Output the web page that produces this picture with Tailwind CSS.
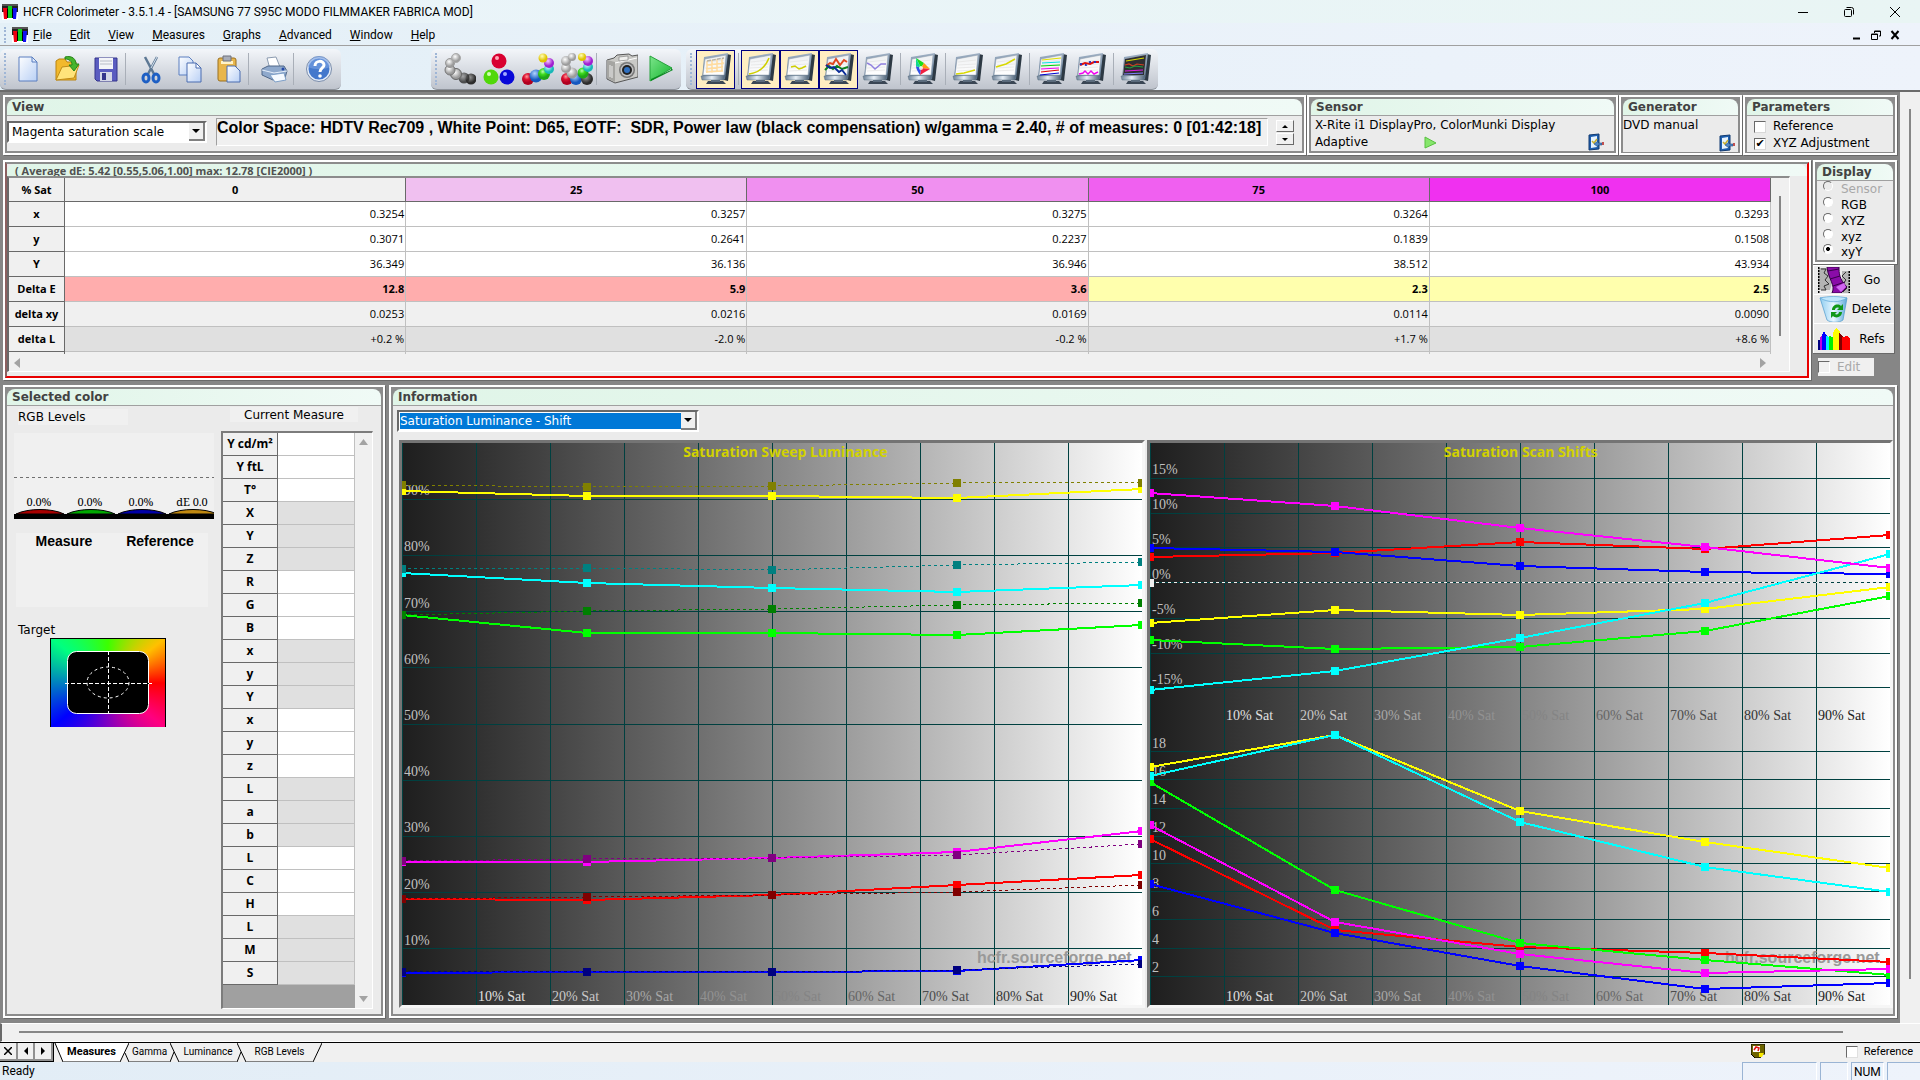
<!DOCTYPE html>
<html lang="en">
  <head>
    <meta charset="UTF-8" />
    <meta name="viewport" content="width=device-width, initial-scale=1.0" />
    <script src="https://cdn.jsdelivr.net/npm/@tailwindcss/browser@4"></script>
    <title>HCFR Colorimeter</title>
  </head>
  <body class="bg-[#808080] text-black font-['DejaVu_Sans',sans-serif] text-[12px] leading-4">
    <!-- shared gradients and symbols -->
    <svg class="absolute w-0 h-0" aria-hidden="true">
      <defs>
        <linearGradient id="gFrame" x1="0" y1="0" x2="0" y2="1"><stop offset="0" stop-color="#9fb0c4" /><stop offset="1" stop-color="#5d7894" /></linearGradient>
        <linearGradient id="gChin" x1="0" y1="0" x2="1" y2="0"><stop offset="0" stop-color="#6d8298" /><stop offset=".45" stop-color="#e6eef6" /><stop offset="1" stop-color="#4c6176" /></linearGradient>
        <linearGradient id="gScreen" x1="0" y1="0" x2="0" y2="1"><stop offset="0" stop-color="#eef0f2" /><stop offset="1" stop-color="#ffffff" /></linearGradient>
        <linearGradient id="gPage" x1="0" y1="0" x2="1" y2="1"><stop offset="0" stop-color="#fdfeff" /><stop offset="1" stop-color="#b9d0f5" /></linearGradient>
        <linearGradient id="gBin" x1="0" y1="0" x2="1" y2="0"><stop offset="0" stop-color="#8fcdf0" /><stop offset=".5" stop-color="#e8f7ff" /><stop offset="1" stop-color="#5fa9d8" /></linearGradient>
        <linearGradient id="gPlay" x1="0" y1="0" x2="1" y2="1"><stop offset="0" stop-color="#7de58c" /><stop offset="1" stop-color="#12b52c" /></linearGradient>
        <radialGradient id="sGray" cx=".4" cy=".35"><stop offset="0" stop-color="#fff" /><stop offset="1" stop-color="#9c9c9c" /></radialGradient>
        <radialGradient id="sDark" cx=".4" cy=".35"><stop offset="0" stop-color="#999" /><stop offset="1" stop-color="#2c2c2c" /></radialGradient>
        <radialGradient id="sRed" cx=".4" cy=".3"><stop offset="0" stop-color="#ff9a9a" /><stop offset=".5" stop-color="#dd1030" /><stop offset="1" stop-color="#b00020" /></radialGradient>
        <radialGradient id="sGreen" cx=".4" cy=".3"><stop offset="0" stop-color="#b8ffb0" /><stop offset=".5" stop-color="#3edc1e" /><stop offset="1" stop-color="#20a818" /></radialGradient>
        <radialGradient id="sSky" cx=".4" cy=".3"><stop offset="0" stop-color="#b0d4ff" /><stop offset="1" stop-color="#1458c0" /></radialGradient>
        <radialGradient id="sCyan" cx=".4" cy=".3"><stop offset="0" stop-color="#d8ffff" /><stop offset="1" stop-color="#18b8b8" /></radialGradient>
        <radialGradient id="sViolet" cx=".4" cy=".3"><stop offset="0" stop-color="#f8ccff" /><stop offset="1" stop-color="#a020d0" /></radialGradient>
        <radialGradient id="sYellow" cx=".4" cy=".3"><stop offset="0" stop-color="#ffffb8" /><stop offset="1" stop-color="#e0c400" /></radialGradient>
        <symbol id="logo" viewBox="0 0 16 16">
          <path d="M0 0h16v8H0z" fill="#222" /><path d="M0 8h16v8H0z" fill="#fff" /><path d="M0 0h16v2H0z" fill="#555" />
          <path d="M1 4h4v11H2z" fill="#f00010" /><path d="M6 2h4v12H6z" fill="#10d020" /><path d="M11 4h4l-1 11h-3z" fill="#1010f0" />
          <path d="M5 5h1v9H5zM10 5h1v9h-1z" fill="#000" />
        </symbol>
        <symbol id="monitor" viewBox="0 0 34 34">
          <path d="M9 29h15l3 3H7z" fill="#3a4654" /><path d="M12 27h9v3h-9z" fill="#5b6b7c" />
          <path d="M28 2l4 1-3 26-4-1z" fill="#2d3944" />
          <path d="M5 5L29 1l-3 26H3z" fill="url(#gFrame)" />
          <path d="M2 24l24-1-1 5H3z" fill="url(#gChin)" stroke="#5f7080" stroke-width=".5" />
          <path d="M6 7l21-4-2 20H4z" fill="url(#gScreen)" stroke="#8a99a8" stroke-width=".5" />
          <path d="M7 10l18-2M7 13l18-1M6 16l18-1M6 19l18-1" stroke="#e3e3e3" stroke-width=".7" />
        </symbol>
        <symbol id="wizard" viewBox="0 0 18 18">
          <path d="M2 2l10-1v15l-10 1z" fill="#1d5fb0" stroke="#123a70" /><path d="M4 4l6-1v11l-6 1z" fill="#e6f3ff" />
          <path d="M5 8l2 2 3-4" fill="none" stroke="#c8b030" stroke-width="1.5" /><path d="M7 11l4-3v2h4v2h-4v2z" fill="#4d86c8" stroke="#27507f" stroke-width=".6" /><path d="M15 9h2v3h-2z" fill="#c05050" />
        </symbol>
      </defs>
    </svg>

    <div class="flex flex-col h-screen min-h-[900px]">
      <!-- title bar -->
      <header class="flex items-center h-[23px] pl-[2px] bg-gradient-to-r from-[#eaf4fa] to-[#e9f5f4] font-[Roboto,sans-serif]">
        <svg class="w-4 h-4"><use href="#logo" /></svg>
        <h1 class="pl-[5px]">HCFR Colorimeter - 3.5.1.4 - [SAMSUNG 77 S95C MODO FILMMAKER FABRICA MOD]</h1>
        <div class="flex items-center ml-auto pr-[2px]">
          <button aria-label="Minimize" class="w-[46px] flex justify-center"><svg class="w-3 h-3" viewBox="0 0 12 12"><path d="M1 6.500h10" stroke="#000" /></svg></button>
          <button aria-label="Restore" class="w-[46px] flex justify-center"><svg class="w-3 h-3" viewBox="0 0 12 12" fill="none" stroke="#000"><rect x="1.500" y="3.500" width="7" height="7" rx="1" /><path d="M3.500 1.500h5a2 2 0 0 1 2 2v5" /></svg></button>
          <button aria-label="Close" class="w-[46px] flex justify-center"><svg class="w-3 h-3" viewBox="0 0 12 12"><path d="M1 1l10 10M11 1L1 11" stroke="#000" /></svg></button>
        </div>
      </header>

      <!-- menu bar -->
      <nav class="flex items-center h-[23px] pl-1 pt-px bg-gradient-to-r from-[#e4f0f7] to-[#eef3fb] border-b border-[#a0a0a0] font-[Roboto,sans-serif]">
        <span class="h-4 border-l-2 border-dotted border-[#9fb6d6]"></span>
        <svg class="w-4 h-4 ml-[6px] mr-1"><use href="#logo" /></svg>
        <a href="#" class="pl-px pr-[18px]"><u>F</u>ile</a>
        <a href="#" class="pr-[18px]"><u>E</u>dit</a>
        <a href="#" class="pr-[18px]"><u>V</u>iew</a>
        <a href="#" class="pr-[18px]"><u>M</u>easures</a>
        <a href="#" class="pr-[18px]"><u>G</u>raphs</a>
        <a href="#" class="pr-[18px]"><u>A</u>dvanced</a>
        <a href="#" class="pr-[18px]"><u>W</u>indow</a>
        <a href="#"><u>H</u>elp</a>
        <div class="flex ml-auto pr-5 gap-[9px]">
          <button aria-label="Minimize document"><svg class="w-[10px] h-[10px]" viewBox="0 0 10 10"><path d="M1 8.500h7" stroke="#000" stroke-width="2" /></svg></button>
          <button aria-label="Restore document"><svg class="w-[10px] h-[10px]" viewBox="0 0 10 10" fill="none" stroke="#000"><path d="M3.500 3V1h6v5H8M3 1.500h7" /><path d="M.5 4h6v5.500h-6zM0 4.500h7" /></svg></button>
          <button aria-label="Close document"><svg class="w-[10px] h-[10px]" viewBox="0 0 10 10"><path d="M1.500 1l7 8M8.500 1l-7 8" stroke="#000" stroke-width="2" /></svg></button>
        </div>
      </nav>

      <!-- toolbars -->
      <div class="flex items-end h-11 bg-gradient-to-r from-[#e2eff7] to-[#eef3fb]">
        <div class="flex items-center h-[41px] w-[341px] rounded-md bg-gradient-to-b from-[#f3f6fa] to-[#bfc4cd] border-b border-[#8d929a]">
          <span class="h-8 ml-1 mr-[2px] border-l-2 border-dotted border-[#9fb6d6]"></span>
          <button aria-label="New" class="w-[39px] flex justify-center"><svg class="w-8 h-8" viewBox="0 0 32 32"><path d="M7 4h13l5 5v19H7z" fill="url(#gPage)" stroke="#5b7fc0" /><path d="M20 4v5h5z" fill="#dfeafc" stroke="#5b7fc0" /></svg></button>
          <button aria-label="Open" class="w-[39px] flex justify-center"><svg class="w-8 h-8" viewBox="0 0 32 32"><path d="M5 27V8l3-2h6l2 3h9v18z" fill="#f2b92c" stroke="#b98310" /><path d="M5 27l6-13 17-2-5 13z" fill="#ffe47a" stroke="#c08c18" /><path d="M14 4c8-2 11 3 11 7h3l-5 7-5-6h3c0-4-3-6-7-6z" fill="#46b52c" stroke="#25831a" /></svg></button>
          <button aria-label="Save" class="w-[39px] flex justify-center"><svg class="w-8 h-8" viewBox="0 0 32 32"><path d="M5 5h22v23H7l-2-2z" fill="#5a5cc0" stroke="#34358c" /><path d="M9 5h14v11H9z" fill="#f3f4f8" /><path d="M10 8h12M10 11h12" stroke="#b8bcc8" /><path d="M10 19h12v9H10z" fill="#d4d7e6" /><path d="M12 20h4v7h-4z" fill="#34358c" /></svg></button>
          <span class="w-[6px] h-8 border-l border-[#a9afb8]"></span>
          <button aria-label="Cut" class="w-[39px] flex justify-center"><svg class="w-8 h-8" viewBox="0 0 32 32" fill="none"><path d="M10 4l9 17M22 4l-9 17" stroke="#5d7894" stroke-width="2.500" /><path d="M22 4l-6 11" stroke="#d6e2ee" stroke-width="1" /><ellipse cx="11" cy="25" rx="3" ry="4" stroke="#1d5fc4" stroke-width="3" /><ellipse cx="21" cy="25" rx="3" ry="4" stroke="#1d5fc4" stroke-width="3" /></svg></button>
          <button aria-label="Copy" class="w-[39px] flex justify-center"><svg class="w-8 h-8" viewBox="0 0 32 32"><path d="M5 4h10l4 4v14H5z" fill="url(#gPage)" stroke="#5b7fc0" /><path d="M13 10h9l5 5v14H13z" fill="url(#gPage)" stroke="#4a6cb0" /><path d="M22 10v5h5z" fill="#fff" stroke="#4a6cb0" /></svg></button>
          <button aria-label="Paste" class="w-[39px] flex justify-center"><svg class="w-8 h-8" viewBox="0 0 32 32"><rect x="5" y="5" width="18" height="23" rx="2" fill="#e8b64c" stroke="#9a7020" /><path d="M8 8h12v3H8z" fill="#fff3c8" /><path d="M10 3h8v5h-8z" fill="#a8adb8" stroke="#6c717c" /><path d="M14 13h8l5 5v11H14z" fill="url(#gPage)" stroke="#4a6cb0" /></svg></button>
          <span class="w-[6px] h-8 border-l border-[#a9afb8]"></span>
          <button aria-label="Print" class="w-[39px] flex justify-center"><svg class="w-8 h-8" viewBox="0 0 32 32"><path d="M9 5l9-1 4 10-10 2z" fill="#fff" stroke="#8b9bb0" /><path d="M4 16l6-3 16 0 3 5-2 7-12 2L4 22z" fill="#8fa9cc" stroke="#4f6788" /><path d="M4 17l12 3 13-2" stroke="#e5eefa" fill="none" /><path d="M12 22l14-2 2 7-11 2z" fill="#f5faff" stroke="#7fa0c8" /><circle cx="25" cy="16" r="1.500" fill="#2448a8" /></svg></button>
          <span class="w-[6px] h-8 border-l border-[#a9afb8]"></span>
          <button aria-label="Help" class="w-[39px] flex justify-center"><svg class="w-8 h-8" viewBox="0 0 32 32"><circle cx="16" cy="16" r="11.500" fill="#4478cc" stroke="#e4ecf8" stroke-width="2" /><circle cx="16" cy="16" r="12.500" fill="none" stroke="#7a8caa" /><path d="M5 14a11 11 0 0 1 22 0c-7 3-15 3-22 0z" fill="#7aa2e2" opacity=".6" /><path d="M12 13c0-6 9-6 9-1 0 3-4 3-4 7" fill="none" stroke="#fff" stroke-width="3" /><circle cx="17" cy="23" r="1.800" fill="#fff" /></svg></button>
        </div>

        <div class="flex items-center h-[41px] w-[250px] ml-[90px] rounded-md bg-gradient-to-b from-[#f3f6fa] to-[#bfc4cd] border-b border-[#8d929a]">
          <span class="h-8 ml-1 mr-[3px] border-l-2 border-dotted border-[#9fb6d6]"></span>
          <button aria-label="Measure grays" class="w-[39px] flex justify-center"><svg class="w-8 h-8" viewBox="0 0 32 32"><circle cx="27" cy="26" r="5.500" fill="url(#sDark)" /><circle cx="20" cy="25" r="5.500" fill="url(#sDark)" opacity=".8" /><circle cx="12" cy="21" r="5.500" fill="url(#sGray)" stroke="#666" /><circle cx="6" cy="17" r="5" fill="url(#sGray)" stroke="#777" /><circle cx="6" cy="10" r="4.500" fill="url(#sGray)" stroke="#999" /><circle cx="12" cy="5" r="4.500" fill="url(#sGray)" stroke="#aaa" /></svg></button>
          <button aria-label="Measure primaries" class="w-[39px] flex justify-center"><svg class="w-8 h-8" viewBox="0 0 32 32"><circle cx="16" cy="8" r="7.500" fill="#d80030" /><circle cx="8" cy="24" r="7.500" fill="#50d808" /><circle cx="24" cy="24" r="7.500" fill="#0808d8" /><circle cx="14" cy="5" r="2" fill="#ffa8b8" /><circle cx="6" cy="21" r="2" fill="#d0ffb0" /><circle cx="22" cy="21" r="2" fill="#a0a8ff" /></svg></button>
          <button aria-label="Measure saturations" class="w-[39px] flex justify-center"><svg class="w-8 h-8" viewBox="0 0 32 32"><circle cx="6" cy="26" r="6" fill="url(#sRed)" /><circle cx="14" cy="23" r="6.500" fill="url(#sSky)" /><circle cx="22" cy="21" r="6" fill="url(#sGreen)" /><circle cx="27" cy="16" r="5" fill="url(#sCyan)" /><circle cx="27" cy="10" r="5" fill="url(#sViolet)" /><circle cx="21" cy="5" r="4.500" fill="url(#sYellow)" /></svg></button>
          <button aria-label="Measure all colors" class="w-[39px] flex justify-center"><svg class="w-8 h-8" viewBox="0 0 32 32"><circle cx="6" cy="26" r="6" fill="url(#sRed)" /><circle cx="15" cy="26" r="6" fill="url(#sSky)" /><circle cx="26" cy="26" r="6" fill="url(#sDark)" /><circle cx="22" cy="20" r="5.500" fill="url(#sGreen)" /><circle cx="11" cy="20" r="5.500" fill="url(#sGray)" /><circle cx="27" cy="14" r="5" fill="url(#sCyan)" /><circle cx="5" cy="15" r="5" fill="url(#sGray)" /><circle cx="27" cy="8" r="5" fill="url(#sViolet)" /><circle cx="5" cy="8" r="5" fill="url(#sGray)" /><circle cx="21" cy="4" r="4" fill="url(#sYellow)" /><circle cx="11" cy="4" r="4" fill="url(#sGray)" /></svg></button>
          <span class="w-[6px] h-8 border-l border-[#a9afb8]"></span>
          <button aria-label="Snapshot" class="w-[39px] flex justify-center"><svg class="w-8 h-8" viewBox="0 0 32 32"><path d="M1 7l7-2 3-3 12-1 3 2 6-1v22L9 30l-8-4z" fill="#c9c9c6" stroke="#565656" /><path d="M1 7l8 2v20l-8-4z" fill="#a5a5a2" /><path d="M9 10l22-5" stroke="#fff" /><path d="M4 12v12M6 13v12" stroke="#eee" /><path d="M13 4l9-1v4l-9 1z" fill="#f0f0ee" stroke="#777" stroke-width=".6" /><circle cx="21" cy="17" r="8" fill="#777" /><circle cx="21" cy="17" r="6.500" fill="#c0c0c0" /><circle cx="21" cy="17" r="5" fill="#222" /><circle cx="21" cy="17" r="3" fill="#2f6fc0" /></svg></button>
          <button aria-label="Start" class="w-[39px] flex justify-center"><svg class="w-8 h-8" viewBox="0 0 32 32"><path d="M5 3l22 12L5 28z" fill="url(#gPlay)" stroke="#25a33a" /><path d="M6 26l20-9v-2l2 2-22 11z" fill="#0a8a20" /></svg></button>
        </div>

        <div class="flex items-center h-[41px] w-[472px] ml-[5px] rounded-md bg-gradient-to-b from-[#f3f6fa] to-[#bfc4cd] border-b border-[#8d929a]">
          <span class="h-8 ml-1 mr-[4px] border-l-2 border-dotted border-[#9fb6d6]"></span>
          <button aria-label="Measures view" class="w-[39px] h-[39px] flex justify-center items-center bg-[#ffeec2] border border-[#000080]"><svg class="w-[34px] h-[34px]" viewBox="0 0 34 34"><use href="#monitor" /><path d="M8 13l17-2M7 17l17-2M7 20l17-1M8 9v12M13 8v13M18 7v13M23 7v13" stroke="#ffdca0" stroke-width="1.500" fill="none" /><path d="M8 9l17-3" stroke="#b8b0a0" stroke-width="1.500" stroke-dasharray="4 1" /></svg></button>
          <span class="w-[6px] h-8 flex justify-center"><i class="border-l border-[#a9afb8]"></i></span>
          <button aria-label="Luminance graph" class="w-[39px] h-[39px] flex justify-center items-center bg-[#ffeec2] border border-[#000080]"><svg class="w-[34px] h-[34px]" viewBox="0 0 34 34"><use href="#monitor" /><path d="M5 22c9-1 16-6 20-16" stroke="#cfcf00" stroke-width="1.500" fill="none" /></svg></button>
          <button aria-label="Gamma graph" class="w-[39px] h-[39px] flex justify-center items-center bg-[#ffeec2] border border-[#000080]"><svg class="w-[34px] h-[34px]" viewBox="0 0 34 34"><use href="#monitor" /><path d="M8 15l4-1 4 3 3-1 4-2" stroke="#cfcf00" stroke-width="1.500" fill="none" /></svg></button>
          <button aria-label="RGB levels graph" class="w-[39px] h-[39px] flex justify-center items-center bg-[#ffeec2] border border-[#000080]"><svg class="w-[34px] h-[34px]" viewBox="0 0 34 34" fill="none" stroke-width="2"><use href="#monitor" /><path d="M4 14l4-3 3 1 3-5 4 6 4-5 3 2" stroke="#e04820" /><path d="M3 18l4-4 4 3 4-3 5 3 6-2" stroke="#108020" /><path d="M4 13l4 3 4-1 5 5 3-2 4 5" stroke="#0a2c98" /></svg></button>
          <button aria-label="Color temperature graph" class="w-[39px] h-[39px] flex justify-center items-center"><svg class="w-[34px] h-[34px]" viewBox="0 0 34 34"><use href="#monitor" /><path d="M6 11l4 2 4 4 6-5h5" stroke="#9080e0" stroke-width="1.500" fill="none" /></svg></button>
          <span class="w-[6px] h-8 flex justify-center"><i class="border-l border-[#a9afb8]"></i></span>
          <button aria-label="CIE chart" class="w-[39px] h-[39px] flex justify-center items-center"><svg class="w-[34px] h-[34px]" viewBox="0 0 34 34"><use href="#monitor" /><path d="M10 6l8 5-3 5z" fill="#18e018" /><path d="M18 11l6 6-9-1z" fill="#ff9a10" /><path d="M24 17l-10 6 1-7z" fill="#f02040" /><path d="M14 23c-2-3-4-6-4-9l5 2z" fill="#3050e8" /><path d="M10 14V6l5 10z" fill="#10d890" /><circle cx="15" cy="16" r="2" fill="#fff" opacity=".8" /></svg></button>
          <span class="w-[6px] h-8 flex justify-center"><i class="border-l border-[#a9afb8]"></i></span>
          <button aria-label="Near black graph" class="w-[39px] h-[39px] flex justify-center items-center"><svg class="w-[34px] h-[34px]" viewBox="0 0 34 34"><use href="#monitor" /><path d="M5 22l8-1 11-3" stroke="#d8d800" stroke-width="1.500" fill="none" /></svg></button>
          <button aria-label="Near white graph" class="w-[39px] h-[39px] flex justify-center items-center"><svg class="w-[34px] h-[34px]" viewBox="0 0 34 34"><use href="#monitor" /><path d="M6 15l10-3 9-5" stroke="#d8d800" stroke-width="1.500" fill="none" /></svg></button>
          <span class="w-[6px] h-8 flex justify-center"><i class="border-l border-[#a9afb8]"></i></span>
          <button aria-label="Saturation luminance graph" class="w-[39px] h-[39px] flex justify-center items-center"><svg class="w-[34px] h-[34px]" viewBox="0 0 34 34" stroke-width="1.200"><use href="#monitor" /><path d="M7 8l19-2" stroke="#e0e000" /><path d="M7 11l18-1" stroke="#00e0e0" /><path d="M6 14l19-1" stroke="#00d000" /><path d="M6 17l18-1" stroke="#f000f0" /><path d="M6 20l18-2" stroke="#e00000" /><path d="M5 23l19-2" stroke="#0000d0" /></svg></button>
          <button aria-label="Saturation shift graph" class="w-[39px] h-[39px] flex justify-center items-center"><svg class="w-[34px] h-[34px]" viewBox="0 0 34 34" stroke-width="2" fill="none"><use href="#monitor" /><path d="M6 13l5-2 5 1 4-2h5" stroke="#e01010" /><path d="M6 12l6 1 4-3h9" stroke="#2030c0" stroke-dasharray="2 3" /><path d="M5 22l4-1 2-2 3 3 3-3 3 3 4-2" stroke="#f000f0" stroke-width="1.500" /></svg></button>
          <span class="w-[6px] h-8 flex justify-center"><i class="border-l border-[#a9afb8]"></i></span>
          <button aria-label="Full graph" class="w-[39px] h-[39px] flex justify-center items-center"><svg class="w-[34px] h-[34px]" viewBox="0 0 34 34" fill="none" stroke-width="1.200"><use href="#monitor" /><path d="M6 7l21-4-2 20H4z" fill="#2e2e32" /><path d="M7 9l18-3" stroke="#d8d800" /><path d="M6 13l4-1 4 2 4-2 7 1" stroke="#d04020" /><path d="M6 15l5 1 5-2 8 1" stroke="#20a040" /><path d="M6 19l18-1" stroke="#e020e0" /><path d="M5 22l19-1" stroke="#8080ff" /></svg></button>
        </div>
      </div>

      <!-- document area -->
      <main class="flex flex-1 min-h-0 border-t-2 border-[#6b6b6b] bg-[#f0f0f0]">
        <div class="flex flex-col flex-1 min-w-0 gap-[5px] pt-[3px] pb-[5px] pl-[3px] pr-[3px] bg-[#868686]">
          <!-- view row -->
          <div class="flex gap-px h-[60px] shrink-0">
            <section class="flex flex-1 border-2 border-white shadow-[1px_1px_0_#696969]">
              <div class="flex flex-col flex-1 border-2 border-[#8c8c8c] bg-[#8c8c8c]">
                <h2 class="h-[17px] shrink-0 pl-[5px] rounded-t-lg bg-gradient-to-r from-[#e0f5e8] to-[#f0faf6] border-b border-[#a0a0a0] font-bold text-[#424242]">View</h2>
                <div class="flex flex-1 items-start bg-[#ebebeb]">
                  <div class="relative w-[200px] mt-[5px]">
                    <select aria-label="View" class="w-full h-[22px] pl-[3px] appearance-none bg-white border-2 border-t-[#696969] border-l-[#696969] border-b-white border-r-white">
                      <option>Magenta saturation scale</option>
                    </select>
                    <span class="absolute right-[2px] top-[2px] w-4 h-[18px] flex items-center justify-center pointer-events-none bg-[#f0f0f0] border-b-2 border-r-2 border-[#808080]"><svg class="w-2 h-2" viewBox="0 0 8 8"><path d="M0 2h8L4 6z" /></svg></span>
                  </div>
                  <p class="flex-1 ml-[9px] mt-[2px] h-7 whitespace-pre overflow-hidden bg-[#f0f0f0] border border-t-[#a0a0a0] border-l-[#a0a0a0] border-b-white border-r-white font-['Liberation_Sans',sans-serif] font-bold text-[16px] leading-[18px]">Color Space: HDTV Rec709 , White Point: D65, EOTF:  SDR, Power law (black compensation) w/gamma = 2.40, # of measures: 0 [01:42:18]</p>
                  <div class="flex flex-col gap-px w-[18px] ml-2 mr-2 mt-1">
                    <button aria-label="Scroll up" class="flex items-center justify-center h-3 bg-[#f0f0f0] border border-t-white border-l-white border-b-[#696969] border-r-[#696969]"><svg class="w-[6px] h-[6px]" viewBox="0 0 6 6"><path d="M0 5h6L3 2z" /></svg></button>
                    <button aria-label="Scroll down" class="flex items-center justify-center h-3 bg-[#f0f0f0] border border-t-white border-l-white border-b-[#696969] border-r-[#696969]"><svg class="w-[6px] h-[6px]" viewBox="0 0 6 6"><path d="M0 2h6L3 5z" /></svg></button>
                  </div>
                </div>
              </div>
            </section>
            <section class="flex w-[311px] border-2 border-white shadow-[1px_1px_0_#696969]">
              <div class="flex flex-col flex-1 border-2 border-[#8c8c8c] bg-[#8c8c8c]">
                <h2 class="h-[17px] shrink-0 pl-[5px] rounded-t-lg bg-gradient-to-r from-[#e0f5e8] to-[#f0faf6] border-b border-[#a0a0a0] font-bold text-[#424242]">Sensor</h2>
                <div class="flex-1 pl-[4px] bg-[#ebebeb] leading-[18px]">
                  <p>X-Rite i1 DisplayPro, ColorMunki Display</p>
                  <div class="flex items-center h-4">
                    <span class="w-[108px]">Adaptive</span>
                    <button aria-label="Play" class="mx-px"><svg class="w-[13px] h-[13px]" viewBox="0 0 13 13"><path d="M1 1l11 6-11 5z" fill="#86e66c" stroke="#58c040" /></svg></button>
                    <button aria-label="Sensor settings" class="ml-auto mr-[9px]"><svg class="w-[18px] h-[18px]"><use href="#wizard" /></svg></button>
                  </div>
                </div>
              </div>
            </section>
            <section class="flex w-[123px] border-2 border-white shadow-[1px_1px_0_#696969]">
              <div class="flex flex-col flex-1 border-2 border-[#8c8c8c] bg-[#8c8c8c]">
                <h2 class="h-[17px] shrink-0 pl-[5px] rounded-t-lg bg-gradient-to-r from-[#e0f5e8] to-[#f0faf6] border-b border-[#a0a0a0] font-bold text-[#424242]">Generator</h2>
                <div class="flex-1 bg-[#ebebeb] leading-[18px]">
                  <p>DVD manual</p>
                  <div class="flex justify-end"><button aria-label="Generator settings" class="mr-[2px]"><svg class="w-[18px] h-[18px]"><use href="#wizard" /></svg></button></div>
                </div>
              </div>
            </section>
            <section class="flex w-[154px] border-2 border-white shadow-[1px_1px_0_#696969]">
              <div class="flex flex-col flex-1 border-2 border-[#8c8c8c] bg-[#8c8c8c]">
                <h2 class="h-[17px] shrink-0 pl-[5px] rounded-t-lg bg-gradient-to-r from-[#e0f5e8] to-[#f0faf6] border-b border-[#a0a0a0] font-bold text-[#424242]">Parameters</h2>
                <div class="flex-1 pl-[7px] pt-[2px] bg-[#ebebeb] leading-[17px]">
                  <label class="flex items-center gap-[7px] h-[17px]"><input type="checkbox" class="w-3 h-3 appearance-none bg-white border border-t-[#696969] border-l-[#696969] border-b-[#d8d8d8] border-r-[#d8d8d8]" />Reference</label>
                  <label class="flex items-center gap-[7px] h-[17px]"><input type="checkbox" checked class="flex items-center justify-center w-3 h-3 appearance-none bg-white border border-t-[#696969] border-l-[#696969] border-b-[#d8d8d8] border-r-[#d8d8d8] checked:before:content-['✔'] before:text-[11px] before:leading-3" />XYZ Adjustment</label>
                </div>
              </div>
            </section>
          </div>

          <!-- measures grid row -->
          <div class="flex gap-[2px] h-[220px] shrink-0">
            <section class="flex flex-1 min-w-0 border-2 border-white shadow-[1px_1px_0_#696969]">
              <div class="flex flex-col flex-1 min-w-0 border-2 border-t-[#8c8c8c] border-l-[#8c6060] border-r-[#e80000] border-b-[#e80000] bg-[#ebebeb]">
                <h2 class="h-3 shrink-0 pl-2 pt-px rounded-t-lg bg-gradient-to-r from-[#e0f5e8] to-[#f0faf6] font-['Open_Sans',sans-serif] text-[11px] leading-[11px] font-bold text-[#505050]">( Average dE: 5.42 [0.55,5.06,1.00] max: 12.78 [CIE2000] )</h2>
                <div class="flex flex-col flex-1 min-h-0 mr-[17px] mb-1 border border-t-2 border-t-[#8c8c8c] border-l-2 border-l-[#696969] border-b-white border-r-white bg-[#f0f0f0]">
                  <div class="flex flex-1 min-h-0">
                    <div class="flex-1 overflow-hidden">
                      <table class="w-full table-fixed border-separate border-spacing-0 font-['Open_Sans',sans-serif] text-[11px] leading-[14px]">
                        <thead id="gridHead"></thead>
                        <tbody id="gridBody"></tbody>
                      </table>
                    </div>
                    <div class="w-[18px] flex justify-center pt-[18px] pb-[18px]"><span class="w-[2px] bg-[#868686]"></span></div>
                  </div>
                  <div class="flex items-center justify-between h-[17px] pl-1 pr-[22px]">
                    <svg class="w-2 h-[10px]" viewBox="0 0 8 10"><path d="M7 0v10L1 5z" fill="#a3a3a3" /></svg>
                    <svg class="w-2 h-[10px]" viewBox="0 0 8 10"><path d="M1 0v10l6-5z" fill="#a3a3a3" /></svg>
                  </div>
                </div>
              </div>
            </section>
            <div class="flex flex-col w-[84px]">
              <section class="border-2 border-white shadow-[1px_1px_0_#696969]">
                <div class="border-2 border-[#8c8c8c] bg-[#8c8c8c]">
                  <h2 class="h-[17px] pl-[5px] rounded-t-lg bg-gradient-to-r from-[#e0f5e8] to-[#f0faf6] border-b border-[#a0a0a0] font-bold text-[#424242]">Display</h2>
                  <fieldset class="h-[79px] pl-[6px] bg-[#ebebeb]">
                    <label class="flex gap-2 h-[16px] text-[#a8a8a8]"><input type="radio" name="disp" disabled class="w-[10px] h-[10px] appearance-none rounded-full border border-t-[#696969] border-l-[#696969] border-b-white border-r-white" />Sensor</label>
                    <label class="flex gap-2 h-[16px]"><input type="radio" name="disp" class="w-[10px] h-[10px] appearance-none rounded-full bg-white border border-t-[#696969] border-l-[#696969] border-b-white border-r-white" />RGB</label>
                    <label class="flex gap-2 h-[16px]"><input type="radio" name="disp" class="w-[10px] h-[10px] appearance-none rounded-full bg-white border border-t-[#696969] border-l-[#696969] border-b-white border-r-white" />XYZ</label>
                    <label class="flex gap-2 h-[15px]"><input type="radio" name="disp" class="w-[10px] h-[10px] appearance-none rounded-full bg-white border border-t-[#696969] border-l-[#696969] border-b-white border-r-white" />xyz</label>
                    <label class="flex gap-2 h-[15px]"><input type="radio" name="disp" checked class="w-[10px] h-[10px] appearance-none rounded-full bg-[radial-gradient(#000_30%,#fff_40%)] border border-t-[#696969] border-l-[#696969] border-b-white border-r-white" />xyY</label>
                  </fieldset>
                </div>
              </section>
              <div class="flex flex-col mt-px mr-[2px] border-b border-r border-[#696969]">
                <button class="flex items-center h-[29px] pl-1 bg-[#ebebeb] border-t border-l border-white">
                  <svg class="w-8 h-[26px]" viewBox="0 0 32 26"><path d="M0 1h11l4 12-3 10H0zM24 4h8v22h-8z" fill="#b4b4b4" /><path d="M.5 0v26M31.500 4v22" stroke="#000" stroke-dasharray="2 1" stroke-width="2" /><path d="M3 2h5l-2 4 4 3-3 4 4 4-5 2 2 4H3M28 5l-4 4 4 4-3 4 4 4-4 4" stroke="#333" fill="none" /><path d="M9 0h12c0 6 0 12 8 20l-6 6H14C18 18 10 12 9 0z" fill="#8a0ca8" stroke="#38004a" /><path d="M10 4l11-2M12 12l10-3M15 19l12-4" stroke="#38004a" /><path d="M18 20l8-4 2 4-5 5z" fill="#d068f0" /></svg>
                  <span class="flex-1">Go</span>
                </button>
                <button class="flex items-center h-[29px] pl-1 bg-[#ebebeb] border-t border-l border-white">
                  <svg class="w-8 h-[26px]" viewBox="0 0 32 26"><path d="M2 2h27l-4 22c-4 3-12 3-16 0z" fill="url(#gBin)" stroke="#4f9acb" stroke-width=".7" /><path d="M2 2c8-2 19-2 27 0-8 5-18 5-27 0z" fill="#bfe6fb" stroke="#5aa5d5" stroke-width=".7" /><path d="M14 14c0-5 6-7 9-4l2-2v6h-6l2-2c-2-1-4 0-4 2zM24 16c0 5-6 7-9 4l-2 2v-6h6l-2 2c2 1 4 0 4-2z" fill="#109818" /></svg>
                  <span class="flex-1 -ml-px">Delete</span>
                </button>
                <button class="flex items-center h-[30px] pl-1 bg-[#ebebeb] border-t border-l border-white">
                  <svg class="w-8 h-[22px]" viewBox="0 0 32 22" shape-rendering="crispEdges"><path d="M0 22V12h3v10z" fill="#000080" /><path d="M2 22V9l3-2v15z" fill="#c000e0" /><path d="M4 22V7l2-4 3 5v14z" fill="#0000ff" /><path d="M8 22V8l3 1v13z" fill="#00f0ff" /><path d="M11 22V8l4 1v13z" fill="#00f000" /><path d="M15 22V5l3-5 4 4v18z" fill="#ffff00" /><path d="M21 22V4l4 5v13z" fill="#800000" /><path d="M24 22V9l5-1 3 2v12z" fill="#ff0000" /></svg>
                  <span class="flex-1">Refs</span>
                </button>
              </div>
              <label class="flex items-center gap-[7px] mt-1 ml-[5px] w-14 h-[18px] bg-[#f0f0f0] text-[#a8a8a8]"><input type="checkbox" disabled class="w-3 h-3 appearance-none border border-t-[#696969] border-l-[#696969] border-b-white border-r-white" />Edit</label>
            </div>
          </div>

          <!-- bottom row -->
          <div class="flex gap-[4px] flex-1 min-h-0">
            <section class="flex w-[382px] shrink-0 border-2 border-white shadow-[1px_1px_0_#696969]">
              <div class="flex flex-col flex-1 border-2 border-[#8c8c8c] bg-[#8c8c8c]">
                <h2 class="h-[17px] shrink-0 pl-[5px] rounded-t-lg bg-gradient-to-r from-[#e0f5e8] to-[#f0faf6] border-b border-[#a0a0a0] font-bold text-[#424242]">Selected color</h2>
                <div class="flex flex-1 min-h-0 bg-[#ebebeb]">
                  <div class="w-[214px] pl-[7px] pt-[3px]">
                    <h3 class="w-[110px] ml-[4px] bg-[#f0f0f0]">RGB Levels</h3>
                    <svg class="block w-[200px] h-[86px] mt-2 bg-[#f0f0f0]" viewBox="0 0 200 86" font-family="Noto Serif, serif" font-size="11" text-anchor="middle">
                      <path d="M0 44.500h200" stroke="#707070" stroke-dasharray="3 3" />
                      <path d="M0 81h200v5H0z" />
                      <g stroke="#000" stroke-width="1">
                        <path d="M2 81c12-6 36-6 48 0z" fill="#a80000" /><path d="M53 81c12-6 36-6 48 0z" fill="#00a800" /><path d="M104 81c12-6 36-6 48 0z" fill="#0000a8" /><path d="M155 81c12-6 36-6 48 0z" fill="#c08810" />
                      </g>
                      <text x="25" y="73">0.0%</text><text x="76" y="73">0.0%</text><text x="127" y="73">0.0%</text><text x="178" y="73">dE 0.0</text>
                    </svg>
                    <div class="grid grid-cols-2 w-[192px] h-[74px] mt-[14px] ml-[2px] bg-[#f0f0f0] text-center font-['Liberation_Sans',sans-serif] font-bold text-[14px]">
                      <span>Measure</span><span>Reference</span>
                    </div>
                    <h3 class="mt-[15px] ml-[4px] h-4">Target</h3>
                    <div class="w-[116px] h-[89px] ml-9 border border-b-0 border-black bg-[conic-gradient(#3cff00,#ffc000_52deg,#ff0000_90deg,#ff0080_128deg,#8000c0_180deg,#0000ff_232deg,#0080c0_270deg,#00ff80_308deg,#3cff00)]">
                      <svg class="w-full h-full" viewBox="0 0 114 88" fill="none" stroke="#fff">
                        <rect x="16.500" y="12.500" width="81" height="62" rx="9" fill="#000" />
                        <path d="M14 44.500h87M57.500 12v63" stroke="#000" /><path d="M14 44.500h87M57.500 12v63" stroke-dasharray="4 2" /><ellipse cx="57" cy="43.500" rx="21" ry="15.500" stroke-dasharray="3 3" />
                      </svg>
                    </div>
                  </div>
                  <div class="flex flex-col w-[152px] pb-[5px]">
                    <h3 class="w-[128px] ml-[9px] mt-px h-[15px] mb-[9px] bg-[#f0f0f0] text-center">Current Measure</h3>
                    <div class="flex flex-1 min-h-0 border border-t-2 border-t-[#7c7c7c] border-l-2 border-l-[#7c7c7c] border-b-white border-r-white bg-[#f0f0f0]">
                      <div class="flex-1 bg-[#a0a0a0] overflow-hidden">
                        <table class="w-full table-fixed border-separate border-spacing-0 font-['Open_Sans',sans-serif] text-[12px] leading-[18px]">
                          <tbody id="measureBody"></tbody>
                        </table>
                      </div>
                      <div class="flex flex-col justify-between items-center w-[17px] py-[6px]">
                        <svg class="w-[9px] h-[7px]" viewBox="0 0 9 7"><path d="M0 6h9L4.500 0z" fill="#a3a3a3" /></svg>
                        <svg class="w-[9px] h-[7px]" viewBox="0 0 9 7"><path d="M0 1h9L4.500 7z" fill="#a3a3a3" /></svg>
                      </div>
                    </div>
                  </div>
                </div>
              </div>
            </section>

            <section class="flex flex-1 min-w-0 border-2 border-white shadow-[1px_1px_0_#696969]">
              <div class="flex flex-col flex-1 min-w-0 border-2 border-[#8c8c8c] bg-[#8c8c8c]">
                <h2 class="h-[17px] shrink-0 pl-[5px] rounded-t-lg bg-gradient-to-r from-[#e0f5e8] to-[#f0faf6] border-b border-[#a0a0a0] font-bold text-[#424242]">Information</h2>
                <div class="flex flex-col flex-1 min-h-0 pt-1 pb-[6px] bg-[#ebebeb]">
                  <div class="relative w-[302px] h-[22px] mb-2 ml-1">
                    <select aria-label="Information" class="w-full h-[22px] pl-px appearance-none bg-[#0078d7] text-white border-2 border-t-[#696969] border-l-[#696969] border-b-white border-r-white outline outline-1 -outline-offset-3 outline-white">
                      <option>Saturation Luminance - Shift</option>
                    </select>
                    <span class="absolute right-[2px] top-[2px] w-4 h-[18px] flex items-center justify-center pointer-events-none bg-[#f0f0f0] border-b-2 border-r-2 border-[#808080]"><svg class="w-2 h-2" viewBox="0 0 8 8"><path d="M0 2h8L4 6z" /></svg></span>
                  </div>
                  <div class="flex flex-1 min-h-0 gap-[2px] pl-[6px]">
                    <div class="flex flex-1 min-w-0 border-[3px] border-t-[#747474] border-l-[#747474] border-b-[#f6f6f6] border-r-[#f6f6f6] bg-gradient-to-r from-[#1e1e1e] to-white">
                      <svg id="luminance" class="w-full h-full" role="img" aria-label="Saturation Sweep Luminance"></svg>
                    </div>
                    <div class="flex flex-1 min-w-0 border-[3px] border-t-[#747474] border-l-[#747474] border-b-[#f6f6f6] border-r-[#f6f6f6] bg-gradient-to-r from-[#1e1e1e] to-white">
                      <svg id="shifts" class="w-full h-full" role="img" aria-label="Saturation Scan Shifts"></svg>
                    </div>
                  </div>
                </div>
              </div>
            </section>
          </div>
        </div>
        <div class="flex justify-center w-5 pt-[17px] pb-11 bg-[#f0f0f0]"><span class="w-[2px] bg-[#868686]"></span></div>
      </main>

      <!-- horizontal scroll bar -->
      <div class="flex items-center h-[19px] shrink-0 pl-[17px] pr-[77px] border-t border-l-2 border-t-white border-l-[#696969] border-b border-b-white bg-[#f0f0f0]"><span class="flex-1 h-[2px] mb-[2px] bg-[#868686]"></span></div>

      <!-- view tabs -->
      <div class="flex items-stretch h-5 shrink-0 border-t border-black bg-[#f0f0f0] font-[Roboto,sans-serif] text-[10px]">
        <div class="flex border-r border-b border-black">
          <button aria-label="Close tab" class="flex items-center justify-center w-[18px] border-r-2 border-b-2 border-[#909090]"><svg class="w-2 h-2" viewBox="0 0 8 8"><path d="M0 0l8 8M8 0L0 8" stroke="#000" stroke-width="1.500" /></svg></button>
          <button aria-label="Previous tab" class="flex items-center justify-center w-[17px] border-r-2 border-b-2 border-[#909090]"><svg class="w-2 h-2" viewBox="0 0 8 8"><path d="M6 0v8L2 4z" /></svg></button>
          <button aria-label="Next tab" class="flex items-center justify-center w-[18px] border-r-2 border-b-2 border-[#909090]"><svg class="w-2 h-2" viewBox="0 0 8 8"><path d="M2 0v8l4-4z" /></svg></button>
        </div>
        <svg class="w-[9px] h-[19px]" viewBox="0 0 9 19"><path d="M1 0h8v19z" fill="#fff" /><path d="M1 0l8 19" stroke="#000" /></svg>
        <button class="w-[57px] font-bold text-[11px] bg-white border-b border-[#808080]">Measures</button>
        <svg class="w-[9px] h-[19px]" viewBox="0 0 9 19"><path d="M0 0h9L0 19z" fill="#fff" /><path d="M9 0L0 19M5 10l4 9" stroke="#000" fill="none" /></svg>
        <button class="w-[41px] border-b border-[#808080]">Gamma</button>
        <svg class="w-[9px] h-[19px]" viewBox="0 0 9 19"><path d="M0 0l9 19M4 9L0 19" stroke="#000" fill="none" /></svg>
        <button class="w-[58px] border-b border-[#808080]">Luminance</button>
        <svg class="w-[9px] h-[19px]" viewBox="0 0 9 19"><path d="M0 0l9 19M4 9L0 19" stroke="#000" fill="none" /></svg>
        <button class="w-[67px] border-b border-[#808080]">RGB Levels</button>
        <svg class="w-[9px] h-[19px]" viewBox="0 0 9 19"><path d="M9 0L0 19" stroke="#000" fill="none" /></svg>
        <svg class="w-[14px] h-[14px] ml-auto mt-px mr-[81px]" viewBox="0 0 14 14"><path d="M0 0h14v10h-3l-2 4H4L0 10z" fill="#6d6400" stroke="#000" /><path d="M2 2h7v6H2z" fill="#fff" /><path d="M3 6l2-3 3 1-1 3" fill="none" stroke="#e01010" stroke-width="1.500" /><path d="M8 9h5l-2 4H8z" fill="#f8e800" /></svg>
        <label class="flex items-center gap-[6px] h-[17px] pr-[7px] text-[11px]"><input type="checkbox" class="w-3 h-3 appearance-none bg-white border border-t-[#696969] border-l-[#696969] border-b-[#e0e0e0] border-r-[#e0e0e0]" />Reference</label>
      </div>

      <!-- status bar -->
      <footer class="flex h-[18px] shrink-0 pl-[2px] gap-[3px] bg-gradient-to-r from-[#e2edf6] to-[#eef3fb] font-[Roboto,sans-serif] leading-[18px]">
        <span class="flex-1">Ready</span>
        <span class="w-[75px] border-t border-l border-[#9ab4d4] border-r border-r-white"></span>
        <span class="w-[28px] border-t border-l border-[#9ab4d4] border-r border-r-white"></span>
        <span class="w-[33px] border-t border-l border-[#9ab4d4] border-r border-r-white pl-[2px]">NUM</span>
        <span class="w-[33px] border-t border-l border-[#9ab4d4]"></span>
      </footer>
    </div>

    <script>
      // measures grid
      const columns = [
        ["0", "bg-[#f0f0f0]"],
        ["25", "bg-[#f0c0f0]"],
        ["50", "bg-[#f090f0]"],
        ["75", "bg-[#f060f0]"],
        ["100", "bg-[#f030f0]"],
      ];
      const white = "bg-white";
      const light = "bg-[#f0f0f0]";
      const dark = "bg-[#e0e0e0]";
      const red = "bg-[#ffadad] font-bold";
      const yellow = "bg-[#ffffad] font-bold";
      const rows = [
        ["x", ["0.3254", "0.3257", "0.3275", "0.3264", "0.3293"], white],
        ["y", ["0.3071", "0.2641", "0.2237", "0.1839", "0.1508"], white],
        ["Y", ["36.349", "36.136", "36.946", "38.512", "43.934"], white],
        ["Delta E", ["12.8", "5.9", "3.6", "2.3", "2.5"], [red, red, red, yellow, yellow]],
        ["delta xy", ["0.0253", "0.0216", "0.0169", "0.0114", "0.0090"], light],
        ["delta L", ["+0.2 %", "-2.0 %", "-0.2 %", "+1.7 %", "+8.6 %"], dark],
        ["", ["", "", "", "", ""], light],
      ];
      document.getElementById("gridHead").innerHTML =
        `<tr class="h-6"><th class="w-[56px] border-b border-r border-[#696969] bg-[#f0f0f0]">% Sat</th>` +
        columns.map(([name, bg]) => `<th class="border-b border-r border-[#696969] ${bg}">${name}</th>`).join("") +
        `</tr>`;
      document.getElementById("gridBody").innerHTML = rows
        .map(
          ([name, cells, bg]) =>
            `<tr class="h-[25px]"><th class="border-b border-r border-[#696969] bg-[#f0f0f0]">${name}</th>` +
            cells
              .map((v, i) => `<td class="pr-px text-right border-b border-r border-[#c0c0c0] ${Array.isArray(bg) ? bg[i] : bg}">${v}</td>`)
              .join("") +
            `</tr>`
        )
        .join("");

      // current measure list, shaded in groups of three
      const names = ["Y cd/m²", "Y ftL", "T°", "X", "Y", "Z", "R", "G", "B", "x", "y", "Y", "x", "y", "z", "L", "a", "b", "L", "C", "H", "L", "M", "S"];
      document.getElementById("measureBody").innerHTML = names
        .map(
          (name, i) =>
            `<tr class="h-[23px]"><th class="w-[55px] border-b border-r border-[#696969] bg-[#f0f0f0]">${name}</th>` +
            `<td class="border-b border-r border-[#c0c0c0] ${Math.floor(i / 3) % 2 ? dark : white}"></td></tr>`
        )
        .join("");

      // charts: y values are given on a scale of 562
      const H = 562;
      const pct = (v) => ((v / H) * 100).toFixed(3) + "%";
      const satColors = ["#e0e0e0", "#c8c8c8", "#a8a8a8", "#929292", "#848484", "#666666", "#4c4c4c", "#343434", "#202020"];

      function gridLines(ys) {
        let s = `<g stroke="#004040" shape-rendering="crispEdges">`;
        for (let i = 0; i < 10; i++) s += `<line x1="${i * 10}%" x2="${i * 10}%" y1="0" y2="100%" />`;
        ys.forEach((y) => (s += `<line x1="0" x2="100%" y1="${pct(y)}" y2="${pct(y)}" />`));
        return s + `</g>`;
      }

      function satLabels(y) {
        return satColors
          .map((c, i) => `<text x="${(i + 1) * 10}%" dx="2" y="${pct(y)}" fill="${c}" font-family="Liberation Serif, serif" font-size="14">${i + 1}0% Sat</text>`)
          .join("");
      }

      function valueLabels(list) {
        return list
          .map(([t, y]) => `<text x="2" y="${pct(y - 4)}" fill="#c0c0c0" font-family="Liberation Serif, serif" font-size="14">${t}</text>`)
          .join("");
      }

      function series(color, ys, dashed) {
        let s = "";
        for (let i = 0; i < ys.length - 1; i++) {
          s += `<line x1="${i * 25}%" x2="${i * 25 + 25}%" y1="${pct(ys[i])}" y2="${pct(ys[i + 1])}" stroke="${color}" stroke-width="${dashed ? 1 : 2}" ${dashed ? 'stroke-dasharray="3 3"' : ""} shape-rendering="crispEdges" />`;
        }
        ys.forEach((y, i) => {
          s += `<rect x="${i * 25}%" y="${pct(y)}" width="8" height="8" fill="${color}" transform="translate(-4 -4)" />`;
        });
        return s;
      }

      function title(x, t) {
        return `<text x="${x}" y="14" fill="#d2d200" font-family="Open Sans, sans-serif" font-weight="bold" font-size="14">${t}</text>`;
      }
      const credit = `<text x="98.6%" y="${pct(520)}" text-anchor="end" fill="#999999" font-family="Liberation Sans, sans-serif" font-weight="bold" font-size="16">hcfr.sourceforge.net</text>`;

      const tens = [90, 80, 70, 60, 50, 40, 30, 20, 10].map((v) => [v + "%", (100 - v) * 5.62]);
      document.getElementById("luminance").innerHTML =
        gridLines(tens.map((t) => t[1])) +
        valueLabels(tens) +
        satLabels(558) +
        title("38%", "Saturation Sweep Luminance") +
        credit +
        series("#ffff00", [48, 53, 53, 55, 46]) +
        series("#808000", [42, 44, 43, 40, 40], true) +
        series("#00ffff", [130, 140, 145, 149, 142]) +
        series("#008080", [126, 125, 127, 122, 119], true) +
        series("#00ff00", [172, 190, 190, 192, 182]) +
        series("#008000", [172, 168, 166, 162, 160], true) +
        series("#ff00ff", [419, 419, 415, 409, 388]) +
        series("#800080", [418, 416, 415, 412, 401], true) +
        series("#ff0000", [456, 457, 452, 442, 432]) +
        series("#800000", [456, 454, 452, 449, 442], true) +
        series("#0000ff", [530, 529, 529, 528, 517]) +
        series("#000080", [529, 529, 529, 527, 521], true);

      const shift = [15, 10, 5, 0, -5, -10, -15].map((v) => [v + "%", 140 - v * 7]);
      const error = [18, 16, 14, 12, 10, 8, 6, 4, 2].map((v) => [v, 561 - v * 14]);
      document.getElementById("shifts").innerHTML =
        gridLines(shift.concat(error).map((t) => t[1])) +
        valueLabels(shift.concat(error)) +
        satLabels(277) +
        satLabels(558) +
        title("39.7%", "Saturation Scan Shifts") +
        credit +
        `<line x1="0" x2="100%" y1="${pct(140)}" y2="${pct(140)}" stroke="#f0f0f0" stroke-dasharray="3 3" shape-rendering="crispEdges" />` +
        `<rect x="-4" y="${pct(140)}" width="8" height="8" fill="#f0f0f0" transform="translate(0 -4)" />` +
        series("#ff0000", [114, 110, 99, 106, 92]) +
        series("#00ff00", [197, 206, 204, 188, 153]) +
        series("#0000ff", [105, 109, 123, 129, 131]) +
        series("#ffff00", [180, 167, 172, 166, 144]) +
        series("#00ffff", [247, 228, 195, 160, 111]) +
        series("#ff00ff", [50, 63, 85, 104, 125]) +
        series("#ff0000", [396, 487, 504, 510, 519]) +
        series("#00ff00", [339, 447, 500, 517, 532]) +
        series("#0000ff", [441, 490, 523, 546, 540]) +
        series("#ffff00", [324, 292, 368, 399, 425]) +
        series("#00ffff", [333, 292, 379, 424, 449]) +
        series("#ff00ff", [382, 479, 511, 530, 526]);
    </script>
  </body>
</html>
